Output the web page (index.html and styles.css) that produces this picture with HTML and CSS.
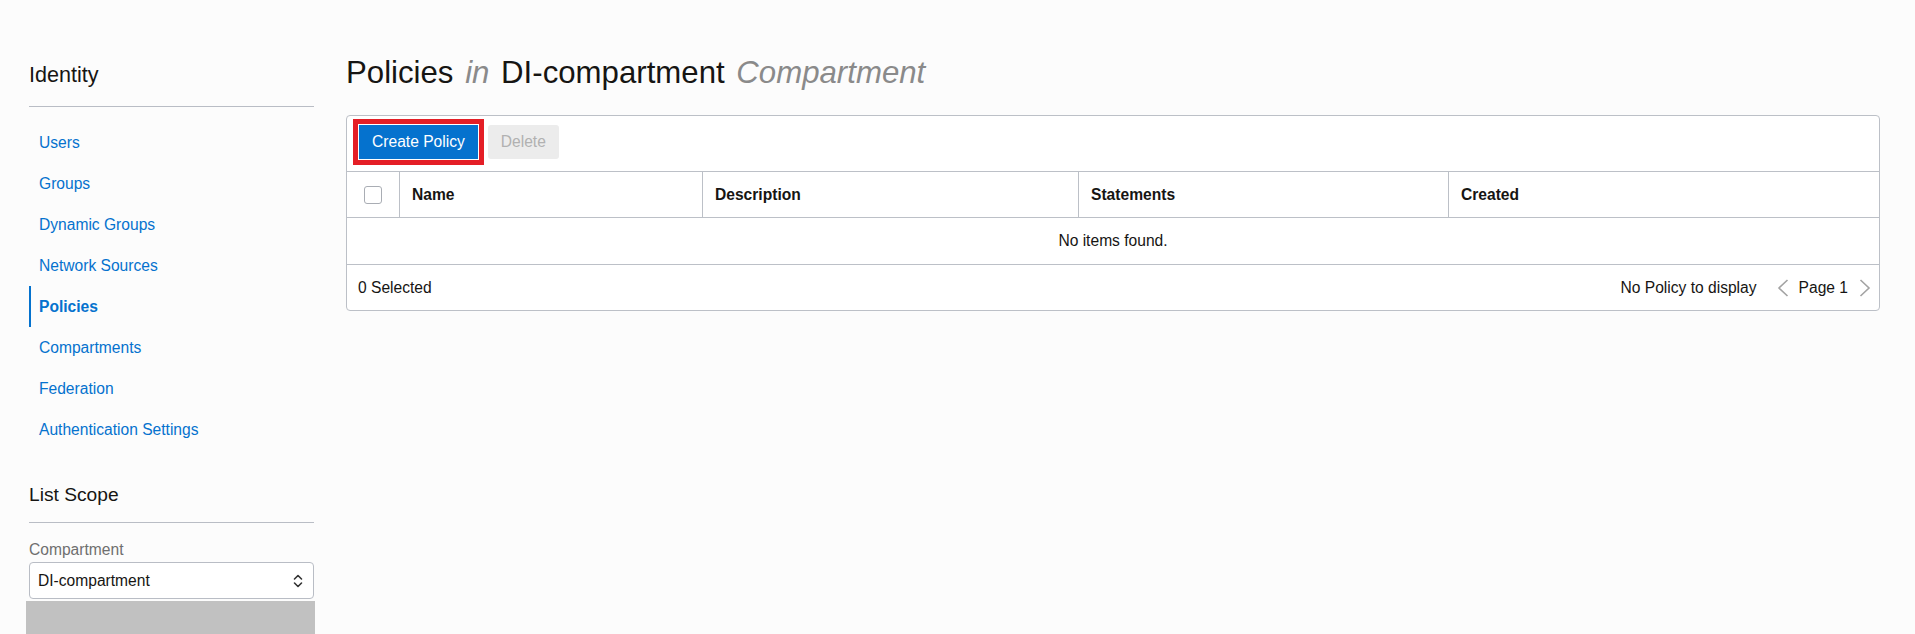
FILE: index.html
```html
<!DOCTYPE html>
<html lang="en">
<head>
<meta charset="utf-8">
<title>Policies</title>
<link rel="stylesheet" href="styles.css">
</head>
<body>
<div class="page">
  <aside class="sidebar">
    <h2 class="side-title">Identity</h2>
    <nav class="side-nav">
      <a class="nav-item" href="#">Users</a>
      <a class="nav-item" href="#">Groups</a>
      <a class="nav-item" href="#">Dynamic Groups</a>
      <a class="nav-item" href="#">Network Sources</a>
      <a class="nav-item active" href="#">Policies</a>
      <a class="nav-item" href="#">Compartments</a>
      <a class="nav-item" href="#">Federation</a>
      <a class="nav-item" href="#">Authentication Settings</a>
    </nav>
    <h3 class="scope-title">List Scope</h3>
    <label class="field-label">Compartment</label>
    <div class="select">
      <span>DI-compartment</span>
      <svg class="select-icon" width="10" height="16" viewBox="0 0 10 16"><path d="M1.5 6 L5 2.5 L8.5 6 M1.5 10 L5 13.5 L8.5 10" fill="none" stroke="#333" stroke-width="1.6" stroke-linecap="round" stroke-linejoin="round"/></svg>
    </div>
    <div class="dropdown-strip"></div>
  </aside>
  <main class="content">
    <h1 class="page-title">Policies <em>in</em> DI-compartment <em>Compartment</em></h1>
    <div class="card">
      <div class="toolbar">
        <button class="btn btn-primary">Create Policy</button>
        <button class="btn btn-disabled">Delete</button>
      </div>
      <div class="grid-row head">
        <div class="cell check-cell"><span class="checkbox"></span></div>
        <div class="cell">Name</div>
        <div class="cell">Description</div>
        <div class="cell">Statements</div>
        <div class="cell">Created</div>
      </div>
      <div class="empty">No items found.</div>
      <div class="footer">
        <span>0 Selected</span>
        <div class="pager">
          <span>No Policy to display</span>
          <svg class="chev chev-left" width="12" height="18" viewBox="0 0 12 18"><path d="M10.5 1 L2 9 L10.5 17" fill="none" stroke="#a3a3a3" stroke-width="1.6"/></svg>
          <span>Page 1</span>
          <svg class="chev chev-right" width="12" height="18" viewBox="0 0 12 18"><path d="M1.5 1 L10 9 L1.5 17" fill="none" stroke="#a3a3a3" stroke-width="1.6"/></svg>
        </div>
      </div>
    </div>
  </main>
</div>
</body>
</html>
```
FILE: styles.css
```css
* { box-sizing: border-box; }
html, body { margin: 0; height: 100%; overflow: hidden; }
body {
  background: #fcfcfc;
  font-family: "Liberation Sans", Arial, sans-serif;
  font-size: 15.6px;
  color: #161513;
}
.page {
  display: flex;
  gap: 32px;
  padding: 0 35px 0 29px;
}

/* Sidebar */
.sidebar {
  width: 285px;
  flex: none;
  padding-top: 62px;
}
.side-title {
  margin: 0;
  font-size: 21.6px;
  font-weight: normal;
  line-height: 25px;
  padding-bottom: 19px;
  border-bottom: 1px solid #b9bdc5;
}
.side-nav {
  display: flex;
  flex-direction: column;
  padding-top: 15px;
}
.nav-item {
  height: 41px;
  display: flex;
  align-items: center;
  padding-left: 8px;
  border-left: 2px solid transparent;
  color: #0572ce;
  text-decoration: none;
  line-height: 18px;
}
.nav-item.active {
  border-left-color: #0572ce;
  font-weight: bold;
}
.scope-title {
  margin: 34px 0 0;
  font-size: 19.2px;
  font-weight: normal;
  line-height: 22px;
  padding-bottom: 16px;
  border-bottom: 1px solid #b9bdc5;
}
.field-label {
  display: block;
  margin-top: 18px;
  line-height: 18px;
  color: #6f6f6f;
}
.select {
  margin-top: 3px;
  height: 37px;
  border: 1px solid #b9bdc5;
  border-radius: 4px;
  background: #fff;
  display: flex;
  align-items: center;
  justify-content: space-between;
  padding: 0 10px 0 8px;
}
.select-icon { display: block; }
.dropdown-strip {
  margin: 2px -1px 0 -3px;
  height: 33px;
  background: #c1c1c1;
}

/* Main content */
.content {
  flex: 1;
  min-width: 0;
  padding-top: 55px;
}
.page-title {
  margin: 0;
  font-size: 31.2px;
  font-weight: normal;
  line-height: 36px;
  word-spacing: 3px;
}
.page-title em { color: #8a8a8a; }

.card {
  margin-top: 24px;
  background: #fff;
  border: 1px solid #bcc0c7;
  border-radius: 4px;
}
.toolbar {
  height: 56px;
  display: flex;
  align-items: flex-start;
  gap: 10px;
  padding: 9px 0 0 12px;
  border-bottom: 1px solid #bcc0c7;
}
.btn {
  height: 34px;
  padding: 0 13px;
  font: inherit;
  border: none;
  border-radius: 3px;
}
.btn-primary {
  background: #0572ce;
  color: #fff;
  border-radius: 0;
  outline: 5px solid #e41e26;
  outline-offset: 1px;
}
.btn-disabled {
  background: #ececec;
  color: #b1b1b1;
}

.grid-row {
  display: grid;
  grid-template-columns: 52px 303px 376px 370px 1fr;
  height: 46px;
  border-bottom: 1px solid #bcc0c7;
}
.cell {
  display: flex;
  align-items: center;
  padding-left: 12px;
  border-left: 1px solid #bcc0c7;
  font-weight: bold;
}
.cell.check-cell {
  border-left: none;
  padding-left: 0;
  justify-content: center;
}
.checkbox {
  width: 18px;
  height: 18px;
  border: 1px solid #a9adb4;
  border-radius: 3px;
  background: #fff;
}
.empty {
  height: 47px;
  display: flex;
  align-items: center;
  justify-content: center;
  border-bottom: 1px solid #bcc0c7;
}
.footer {
  height: 45px;
  display: flex;
  align-items: center;
  justify-content: space-between;
  padding: 0 8px 0 11px;
}
.pager {
  display: flex;
  align-items: center;
}
.chev { display: block; }
.chev-left { margin: 0 10px 0 20px; }
.chev-right { margin-left: 11px; }
```
